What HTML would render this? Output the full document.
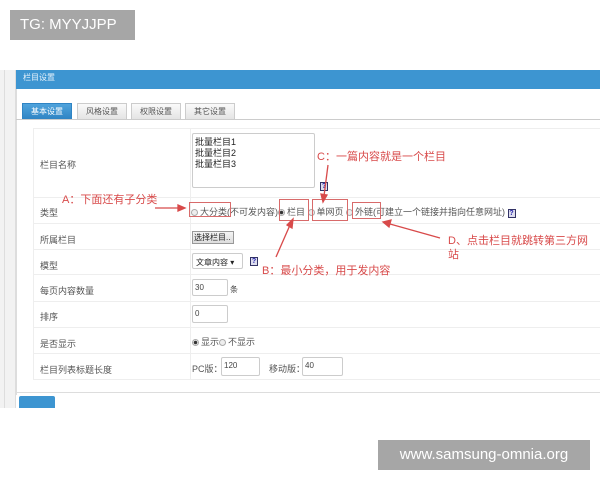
<!DOCTYPE html>
<html><head><meta charset="utf-8"><style>
*{margin:0;padding:0;box-sizing:border-box}
body{width:600px;height:480px;background:#fff;position:relative;overflow:hidden;font-family:"Liberation Sans","Noto Sans CJK SC",sans-serif;font-size:8px;color:#444}
.a{position:absolute}
.row{position:absolute;left:33px;width:567px;border-top:1px solid #eee}
.lbl{position:absolute;left:7px;color:#555;font-size:9px}
.inp{position:absolute;border:1px solid #ccc;border-radius:2px;background:#fff;font-size:8px;padding:3px 2px;color:#444;white-space:nowrap}
.red{color:#d84a4a;font-size:11px;position:absolute;white-space:nowrap}
.box{position:absolute;border:1px solid #d86a6a}
.rad{display:inline-block;width:7px;height:7px;border-radius:50%;border:1px solid #aaa;background:#eee;vertical-align:-1px;margin-right:2px}
.rad.on{background:radial-gradient(circle,#333 0 1.5px,#eee 2px)}
.q{display:inline-block;width:8px;height:9px;border:1px solid #336;background:#dde;color:#22a;font-size:7px;line-height:8px;text-align:center;font-weight:bold}
.tab{position:absolute;top:103px;height:16px;border:1px solid #ccc;border-bottom:none;background:linear-gradient(#fafafa,#e4e4e4);font-size:8px;color:#555;text-align:center;line-height:15px}
</style></head><body>
<div class="a" style="left:10px;top:10px;width:125px;height:30px;background:#a6a6a6;color:#fff;font-size:15px;line-height:30px;padding-left:10px">TG: MYYJJPP</div>

<div class="a" style="left:0;top:70px;width:600px;height:338px;background:#fff"></div>
<div class="a" style="left:0;top:70px;width:16px;height:338px;background:#f2f2f2;border-right:1px solid #ddd"></div>
<div class="a" style="left:4px;top:70px;width:1px;height:338px;background:#ddd"></div>
<div class="a" style="left:16px;top:70px;width:584px;height:19px;background:#3d95d1;color:#e8f3fb;font-size:8px;padding:2px 0 0 7px">栏目设置</div>
<div class="a" style="left:16px;top:89px;width:1px;height:306px;background:#ddd"></div>
<div class="a" style="left:16px;top:119px;width:584px;height:1px;background:#ccc"></div>
<div class="tab" style="left:22px;width:50px;background:linear-gradient(#4fa3dc,#2f84c4);color:#fff;border-color:#2f84c4">基本设置</div>
<div class="tab" style="left:77px;width:50px">风格设置</div>
<div class="tab" style="left:131px;width:50px">权限设置</div>
<div class="tab" style="left:185px;width:50px">其它设置</div>

<div class="a" style="left:33px;top:128px;width:567px;height:252px;border:1px solid #eee;border-right:none"></div>
<div class="a" style="left:190px;top:128px;width:1px;height:252px;background:#eee"></div>
<div class="a" style="left:16px;top:392px;width:584px;height:1px;background:#ddd"></div>

<div class="row" style="top:128px;height:69px"><span class="lbl" style="top:29px">栏目名称</span></div>
<div class="inp" style="left:192px;top:133px;width:123px;height:55px;line-height:11px;color:#222;font-size:9px">批量栏目1<br>批量栏目2<br>批量栏目3</div>
<div class="a" style="left:320px;top:181px"><span class="q">?</span></div>

<div class="row" style="top:197px;height:26px"><span class="lbl" style="top:8px">类型</span></div>
<div class="a" style="left:191px;top:205px;white-space:nowrap;font-size:9px;color:#555"><span class="rad"></span>大分类(不可发内容)<span class="rad on"></span>栏目 <span class="rad"></span>单网页 <span class="rad"></span>外链(可建立一个链接并指向任意网址) <span class="q">?</span></div>

<div class="row" style="top:223px;height:26px"><span class="lbl" style="top:9px">所属栏目</span></div>
<div class="a" style="left:192px;top:231px;width:42px;height:13px;border:1px solid #999;background:linear-gradient(#f4f4f4,#ddd);font-size:8px;line-height:11px;padding:0 1px;color:#222;white-space:nowrap;overflow:hidden">选择栏目..</div>

<div class="row" style="top:249px;height:25px"><span class="lbl" style="top:9px">模型</span></div>
<div class="inp" style="left:192px;top:253px;width:51px;height:16px;padding:3px 3px;color:#222">文章内容 ▾</div>
<div class="a" style="left:250px;top:256px"><span class="q">?</span></div>

<div class="row" style="top:274px;height:27px"><span class="lbl" style="top:9px">每页内容数量</span></div>
<div class="inp" style="left:192px;top:279px;width:36px;height:17px">30</div>
<div class="a" style="left:230px;top:284px">条</div>

<div class="row" style="top:301px;height:26px"><span class="lbl" style="top:8px">排序</span></div>
<div class="inp" style="left:192px;top:305px;width:36px;height:18px">0</div>

<div class="row" style="top:327px;height:26px"><span class="lbl" style="top:9px">是否显示</span></div>
<div class="a" style="left:192px;top:335px;color:#555;font-size:9px"><span class="rad on"></span>显示<span class="rad"></span>不显示</div>

<div class="row" style="top:353px;height:27px"><span class="lbl" style="top:9px">栏目列表标题长度</span></div>
<div class="a" style="left:192px;top:362px;color:#555;font-size:9px">PC版：</div>
<div class="inp" style="left:221px;top:357px;width:39px;height:19px">120</div>
<div class="a" style="left:269px;top:362px;color:#555;font-size:9px">移动版：</div>
<div class="inp" style="left:302px;top:357px;width:41px;height:19px">40</div>

<div class="a" style="left:19px;top:396px;width:36px;height:12px;background:#3d95d1;border-radius:2px 2px 0 0"></div>
<div class="a" style="left:0;top:408px;width:600px;height:72px;background:#fff"></div>

<div class="box" style="left:189px;top:202px;width:42px;height:15px"></div>
<div class="box" style="left:279px;top:199px;width:30px;height:22px"></div>
<div class="box" style="left:312px;top:199px;width:36px;height:22px"></div>
<div class="box" style="left:352px;top:202px;width:29px;height:17px"></div>
<div class="red" style="left:62px;top:191px">A：下面还有子分类</div>
<div class="red" style="left:317px;top:148px">C：一篇内容就是一个栏目</div>
<div class="red" style="left:262px;top:262px">B：最小分类，用于发内容</div>
<div class="red" style="left:448px;top:232px">D、点击栏目就跳转第三方网</div>
<div class="red" style="left:448px;top:246px">站</div>
<svg class="a" style="left:0;top:0" width="600" height="480">
<g stroke="#d84a4a" stroke-width="1.3" fill="#d84a4a">
<line x1="155" y1="208" x2="180" y2="208"/><polygon points="185,208 178,205 178,211"/>
<line x1="328" y1="165" x2="324" y2="196"/><polygon points="323,202 321,194 327,195"/>
<line x1="276" y1="257" x2="290" y2="225"/><polygon points="293,219 287,225 292,228"/>
<line x1="440" y1="238" x2="390" y2="224"/><polygon points="383,222 391,220 389,227"/>
</g></svg>

<div class="a" style="left:378px;top:440px;width:212px;height:30px;background:#a6a6a6;color:#fff;font-size:15px;line-height:30px;text-align:center">www.samsung-omnia.org</div>
</body></html>
